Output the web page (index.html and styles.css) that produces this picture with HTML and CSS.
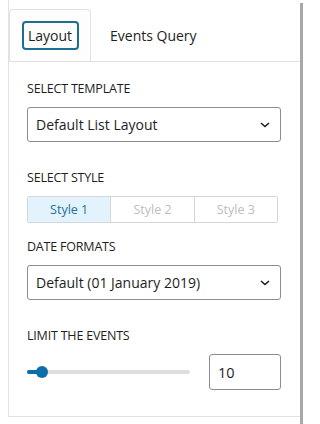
FILE: index.html
```html
<!DOCTYPE html>
<html>
<head>
<meta charset="utf-8">
<link rel="stylesheet" href="styles.css">
</head>
<body>
<div class="frame">
  <div class="panel">
    <div class="tabs">
      <div class="tab tab-active"><span class="tab-label focused">Layout</span></div>
      <div class="tab"><span class="tab-label">Events Query</span></div>
    </div>
    <div class="content">
      <div class="group group-select">
        <div class="label">SELECT TEMPLATE</div>
        <div class="select">
          <span>Default List Layout</span>
          <svg class="chev" width="10" height="6" viewBox="0 0 10 6"><path d="M1 1 L5 4.5 L9 1" fill="none" stroke="#1e1e1e" stroke-width="1.6"/></svg>
        </div>
      </div>
      <div class="group group-buttons">
        <div class="label">SELECT STYLE</div>
        <div class="btn-group">
          <div class="seg seg-on">Style 1</div>
          <div class="seg">Style 2</div>
          <div class="seg">Style 3</div>
        </div>
      </div>
      <div class="group group-select">
        <div class="label">DATE FORMATS</div>
        <div class="select">
          <span>Default (01 January 2019)</span>
          <svg class="chev" width="10" height="6" viewBox="0 0 10 6"><path d="M1 1 L5 4.5 L9 1" fill="none" stroke="#1e1e1e" stroke-width="1.6"/></svg>
        </div>
      </div>
      <div class="group">
        <div class="label">LIMIT THE EVENTS</div>
        <div class="range-row">
          <div class="range">
            <div class="track"><div class="fill"></div><div class="thumb"></div></div>
          </div>
          <div class="num">10</div>
        </div>
      </div>
    </div>
  </div>
  <div class="bar"></div>
</div>
</body>
</html>
```

FILE: styles.css
```css
* { box-sizing: border-box; }
html, body { margin: 0; padding: 0; background: #fff; }
body {
  font-family: "Open Sans", "Noto Sans", sans-serif;
  color: #1e1e1e;
}
.frame {
  display: flex;
  align-items: flex-start;
  padding-left: 8px;
}
.panel {
  width: 292px;
  border-left: 1px solid #e2e2e2;
  border-bottom: 1px solid #e2e2e2;
}
.bar {
  width: 3px;
  height: 421px;
  margin-top: 3px;
  background: #a8a8a8;
}
.tabs {
  display: flex;
  padding-top: 9px;
  border-bottom: 1px solid #e0e0e0;
}
.tab {
  padding: 11px 11px 10px 12px;
  border: 1px solid transparent;
  border-bottom: 0;
  border-radius: 4px 4px 0 0;
  height: 52px;
}
.tab-active {
  border-color: #e2e2e2;
  background: #fdfdfd;
  width: 82px;
}
.tab-label {
  display: inline-block;
  height: 29px;
  line-height: 25px;
  padding: 0 4px;
  border: 2px solid transparent;
  border-radius: 4px;
  font-size: 14px;
  white-space: nowrap;
}
.tab-label.focused { border-color: #1d6e93; width: 57px; }
.content {
  padding: 19px 19px 26px 18px;
}
.label {
  font-size: 12.5px;
  letter-spacing: -0.2px;
  line-height: 16px;
  margin-bottom: 10px;
  color: #1e1e1e;
}
.group-select { margin-bottom: 28px; }
.group-buttons { margin-bottom: 16px; }
.select {
  height: 35px;
  border: 1px solid #8d8d8d;
  border-radius: 3px;
  display: flex;
  align-items: center;
  justify-content: space-between;
  padding: 0 10px 0 8px;
  font-size: 14px;
}
.chev { display: block; }
.btn-group {
  display: flex;
  width: 251px;
  height: 27px;
  border: 1px solid #d6d6d6;
  border-radius: 2px;
}
.seg {
  flex: 1;
  display: flex;
  align-items: center;
  justify-content: center;
  font-size: 12.5px;
  color: #bdbdbd;
  border-left: 1px solid #d6d6d6;
}
.seg:first-child { border-left: 0; }
.seg-on { background: #e2f3fd; color: #25709a; }
.range-row {
  display: flex;
  align-items: center;
  height: 36px;
}
.range {
  width: 163px;
  margin-right: 19px;
}
.track {
  position: relative;
  height: 4px;
  border-radius: 2px;
  background: #dddddd;
}
.fill {
  position: absolute;
  left: 0; top: 0;
  width: 15px; height: 4px;
  border-radius: 2px;
  background: #0b6ea8;
}
.thumb {
  position: absolute;
  left: 9px; top: -4px;
  width: 12px; height: 12px;
  border-radius: 50%;
  background: #0b6ea8;
}
.num {
  width: 72px;
  height: 36px;
  border: 1px solid #8d8d8d;
  border-radius: 3px;
  display: flex;
  align-items: center;
  padding-left: 8px;
  font-size: 14.5px;
}
```
